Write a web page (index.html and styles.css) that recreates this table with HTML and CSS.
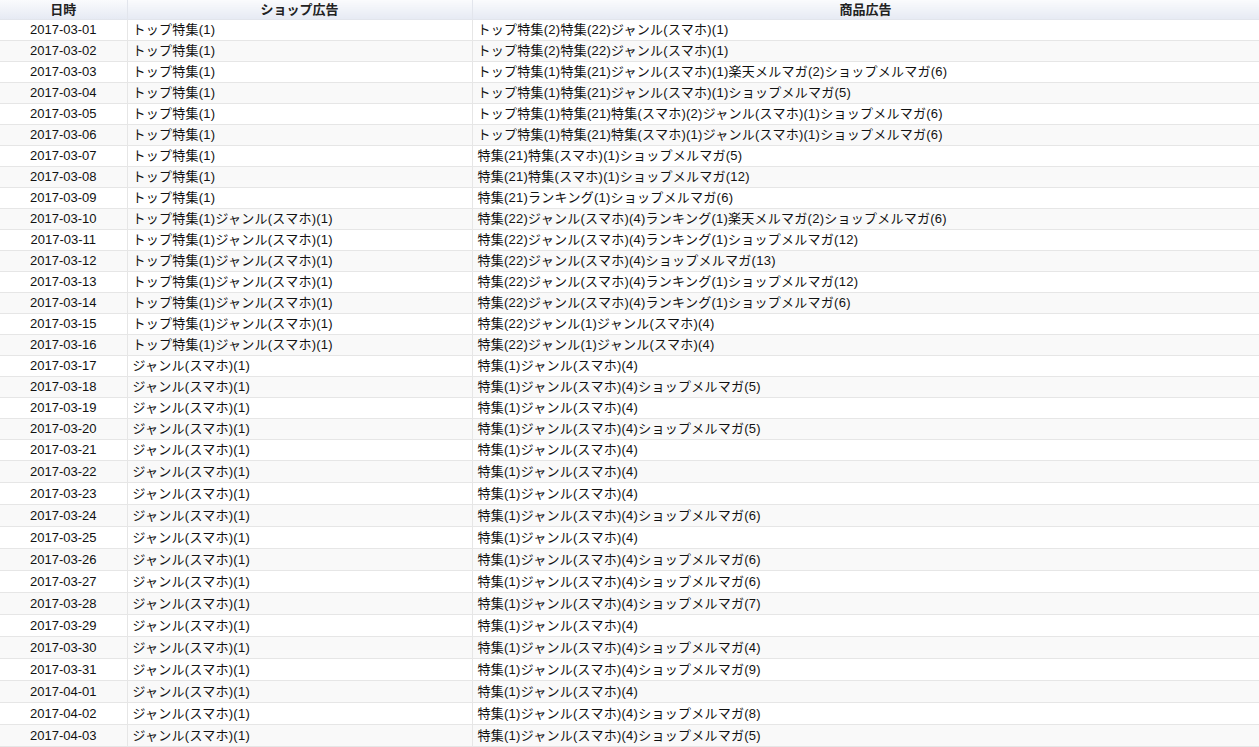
FILE: index.html
```html
<!DOCTYPE html>
<html lang="ja">
<head>
    <meta charset="UTF-8">
    <meta name="viewport" content="width=device-width, initial-scale=1.0">
    <title>広告掲載履歴</title>
    <link rel="stylesheet" href="styles.css">
</head>
<body>
    <table class="ad-table">
        <colgroup>
            <col class="col-date">
            <col class="col-shop">
            <col class="col-item">
        </colgroup>
        <thead>
            <tr>
                <th>日時</th>
                <th>ショップ広告</th>
                <th>商品広告</th>
            </tr>
        </thead>
        <tbody>
            <tr><td class="date">2017-03-01</td><td>トップ特集(1)</td><td>トップ特集(2)特集(22)ジャンル(スマホ)(1)</td></tr>
            <tr><td class="date">2017-03-02</td><td>トップ特集(1)</td><td>トップ特集(2)特集(22)ジャンル(スマホ)(1)</td></tr>
            <tr><td class="date">2017-03-03</td><td>トップ特集(1)</td><td>トップ特集(1)特集(21)ジャンル(スマホ)(1)楽天メルマガ(2)ショップメルマガ(6)</td></tr>
            <tr><td class="date">2017-03-04</td><td>トップ特集(1)</td><td>トップ特集(1)特集(21)ジャンル(スマホ)(1)ショップメルマガ(5)</td></tr>
            <tr><td class="date">2017-03-05</td><td>トップ特集(1)</td><td>トップ特集(1)特集(21)特集(スマホ)(2)ジャンル(スマホ)(1)ショップメルマガ(6)</td></tr>
            <tr><td class="date">2017-03-06</td><td>トップ特集(1)</td><td>トップ特集(1)特集(21)特集(スマホ)(1)ジャンル(スマホ)(1)ショップメルマガ(6)</td></tr>
            <tr><td class="date">2017-03-07</td><td>トップ特集(1)</td><td>特集(21)特集(スマホ)(1)ショップメルマガ(5)</td></tr>
            <tr><td class="date">2017-03-08</td><td>トップ特集(1)</td><td>特集(21)特集(スマホ)(1)ショップメルマガ(12)</td></tr>
            <tr><td class="date">2017-03-09</td><td>トップ特集(1)</td><td>特集(21)ランキング(1)ショップメルマガ(6)</td></tr>
            <tr><td class="date">2017-03-10</td><td>トップ特集(1)ジャンル(スマホ)(1)</td><td>特集(22)ジャンル(スマホ)(4)ランキング(1)楽天メルマガ(2)ショップメルマガ(6)</td></tr>
            <tr><td class="date">2017-03-11</td><td>トップ特集(1)ジャンル(スマホ)(1)</td><td>特集(22)ジャンル(スマホ)(4)ランキング(1)ショップメルマガ(12)</td></tr>
            <tr><td class="date">2017-03-12</td><td>トップ特集(1)ジャンル(スマホ)(1)</td><td>特集(22)ジャンル(スマホ)(4)ショップメルマガ(13)</td></tr>
            <tr><td class="date">2017-03-13</td><td>トップ特集(1)ジャンル(スマホ)(1)</td><td>特集(22)ジャンル(スマホ)(4)ランキング(1)ショップメルマガ(12)</td></tr>
            <tr><td class="date">2017-03-14</td><td>トップ特集(1)ジャンル(スマホ)(1)</td><td>特集(22)ジャンル(スマホ)(4)ランキング(1)ショップメルマガ(6)</td></tr>
            <tr><td class="date">2017-03-15</td><td>トップ特集(1)ジャンル(スマホ)(1)</td><td>特集(22)ジャンル(1)ジャンル(スマホ)(4)</td></tr>
            <tr><td class="date">2017-03-16</td><td>トップ特集(1)ジャンル(スマホ)(1)</td><td>特集(22)ジャンル(1)ジャンル(スマホ)(4)</td></tr>
            <tr><td class="date">2017-03-17</td><td>ジャンル(スマホ)(1)</td><td>特集(1)ジャンル(スマホ)(4)</td></tr>
            <tr><td class="date">2017-03-18</td><td>ジャンル(スマホ)(1)</td><td>特集(1)ジャンル(スマホ)(4)ショップメルマガ(5)</td></tr>
            <tr><td class="date">2017-03-19</td><td>ジャンル(スマホ)(1)</td><td>特集(1)ジャンル(スマホ)(4)</td></tr>
            <tr><td class="date">2017-03-20</td><td>ジャンル(スマホ)(1)</td><td>特集(1)ジャンル(スマホ)(4)ショップメルマガ(5)</td></tr>
            <tr><td class="date">2017-03-21</td><td>ジャンル(スマホ)(1)</td><td>特集(1)ジャンル(スマホ)(4)</td></tr>
            <tr class="tall"><td class="date">2017-03-22</td><td>ジャンル(スマホ)(1)</td><td>特集(1)ジャンル(スマホ)(4)</td></tr>
            <tr class="tall"><td class="date">2017-03-23</td><td>ジャンル(スマホ)(1)</td><td>特集(1)ジャンル(スマホ)(4)</td></tr>
            <tr class="tall"><td class="date">2017-03-24</td><td>ジャンル(スマホ)(1)</td><td>特集(1)ジャンル(スマホ)(4)ショップメルマガ(6)</td></tr>
            <tr class="tall"><td class="date">2017-03-25</td><td>ジャンル(スマホ)(1)</td><td>特集(1)ジャンル(スマホ)(4)</td></tr>
            <tr class="tall"><td class="date">2017-03-26</td><td>ジャンル(スマホ)(1)</td><td>特集(1)ジャンル(スマホ)(4)ショップメルマガ(6)</td></tr>
            <tr class="tall"><td class="date">2017-03-27</td><td>ジャンル(スマホ)(1)</td><td>特集(1)ジャンル(スマホ)(4)ショップメルマガ(6)</td></tr>
            <tr class="tall"><td class="date">2017-03-28</td><td>ジャンル(スマホ)(1)</td><td>特集(1)ジャンル(スマホ)(4)ショップメルマガ(7)</td></tr>
            <tr class="tall"><td class="date">2017-03-29</td><td>ジャンル(スマホ)(1)</td><td>特集(1)ジャンル(スマホ)(4)</td></tr>
            <tr class="tall"><td class="date">2017-03-30</td><td>ジャンル(スマホ)(1)</td><td>特集(1)ジャンル(スマホ)(4)ショップメルマガ(4)</td></tr>
            <tr class="tall"><td class="date">2017-03-31</td><td>ジャンル(スマホ)(1)</td><td>特集(1)ジャンル(スマホ)(4)ショップメルマガ(9)</td></tr>
            <tr class="tall"><td class="date">2017-04-01</td><td>ジャンル(スマホ)(1)</td><td>特集(1)ジャンル(スマホ)(4)</td></tr>
            <tr class="tall"><td class="date">2017-04-02</td><td>ジャンル(スマホ)(1)</td><td>特集(1)ジャンル(スマホ)(4)ショップメルマガ(8)</td></tr>
            <tr class="tall"><td class="date">2017-04-03</td><td>ジャンル(スマホ)(1)</td><td>特集(1)ジャンル(スマホ)(4)ショップメルマガ(5)</td></tr>
        </tbody>
    </table>
</body>
</html>
```

FILE: styles.css
```css
body {
    font-family: 'Liberation Sans', 'Noto Sans CJK JP', sans-serif;
    font-size: 13px;
    color: #111;
    background-color: #fff;
    margin: 0;
    padding: 0;
}

.ad-table {
    width: 1259px;
    border-collapse: collapse;
    table-layout: fixed;
}

.col-date { width: 127px; }
.col-shop { width: 345px; }
.col-item { width: 787px; }

.ad-table th,
.ad-table td {
    border: 1px solid #e6e6e6;
    padding: 0 5px;
    white-space: nowrap;
    overflow: hidden;
    line-height: 18px;
}

.ad-table tr > :first-child { border-left: none; }
.ad-table thead tr > * { border-top: none; }

.ad-table th {
    height: 19px;
    padding: 0 5px;
    font-weight: bold;
    text-align: center;
    color: #222;
    background: linear-gradient(to bottom, #fafbfd, #e6eaf3);
    border-color: #e2e5ec;
}

.ad-table td {
    height: 20px;
    text-align: left;
    letter-spacing: 0.25px;
}

.ad-table td.date {
    text-align: center;
    letter-spacing: 0;
}

.ad-table tbody tr:nth-child(even) td {
    background-color: #f9f9f9;
}

.ad-table tr.tall td {
    height: 21px;
}
```
